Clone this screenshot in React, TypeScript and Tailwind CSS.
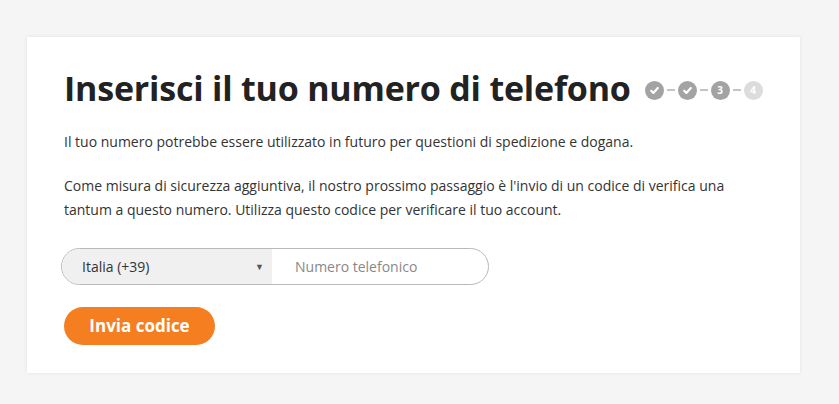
import React from "react";

function Step({ n, done, active }: { n: number; done?: boolean; active?: boolean }) {
  const bg = done || active ? "bg-[#a3a3a3]" : "bg-[#dcdcdc]";
  return (
    <div className={`flex items-center justify-center w-[19px] h-[19px] rounded-full ${bg}`}>
      {done ? (
        <svg width="11" height="11" viewBox="0 0 10 10" fill="none" stroke="white" strokeWidth="2" strokeLinecap="round" strokeLinejoin="round">
          <path d="M2 5.2l2 2 4-4.4" />
        </svg>
      ) : (
        <span className="text-[10px] font-bold text-white leading-none">{n}</span>
      )}
    </div>
  );
}

function Dash() {
  return <div className="w-[8px] h-[2px] bg-[#c4c4c4] mx-[3px]" />;
}

export default function App() {
  return (
    <div
      className="w-[839px] h-[404px] bg-[#f5f5f5] pt-[37px] pl-[27px]"
      style={{ fontFamily: '"Open Sans", "Liberation Sans", sans-serif' }}
    >
      <div className="w-[773px] h-[336px] bg-white shadow-[0_0_4px_rgba(0,0,0,0.08)] pl-[37px] pt-[29px]">
        <div className="flex items-center">
          <h1 className="text-[34px] font-bold text-[#222] tracking-[-0.2px] leading-[44px]">
            Inserisci il tuo numero di telefono
          </h1>
          <div className="flex items-center ml-[14px] mt-[4px]">
            <Step n={1} done />
            <Dash />
            <Step n={2} done />
            <Dash />
            <Step n={3} active />
            <Dash />
            <Step n={4} />
          </div>
        </div>
        <p className="mt-[20px] text-[14px] leading-[24px] text-[#333]">
          Il tuo numero potrebbe essere utilizzato in futuro per questioni di spedizione e dogana.
        </p>
        <p className="mt-[20px] text-[14px] leading-[24px] text-[#333] w-[700px]">
          Come misura di sicurezza aggiuntiva, il nostro prossimo passaggio è l'invio di un codice di verifica una tantum a questo numero. Utilizza questo codice per verificare il tuo account.
        </p>
        <div className="mt-[26px] -ml-[3px] flex w-[428px] h-[37px] rounded-full border border-[#b9b9b9] overflow-hidden">
          <div className="flex items-center justify-between w-[210px] bg-[#f0f0f0] pl-[20px] pr-[8px]">
            <span className="text-[14px] text-[#333]">Italia (+39)</span>
            <span className="text-[9px] text-[#555]">▼</span>
          </div>
          <div className="flex items-center pl-[23px] text-[14px] text-[#888]">Numero telefonico</div>
        </div>
        <button className="mt-[22px] w-[151px] h-[38px] rounded-full bg-[#f57f20] text-white text-[17px] font-bold">
          Invia codice
        </button>
      </div>
    </div>
  );
}
